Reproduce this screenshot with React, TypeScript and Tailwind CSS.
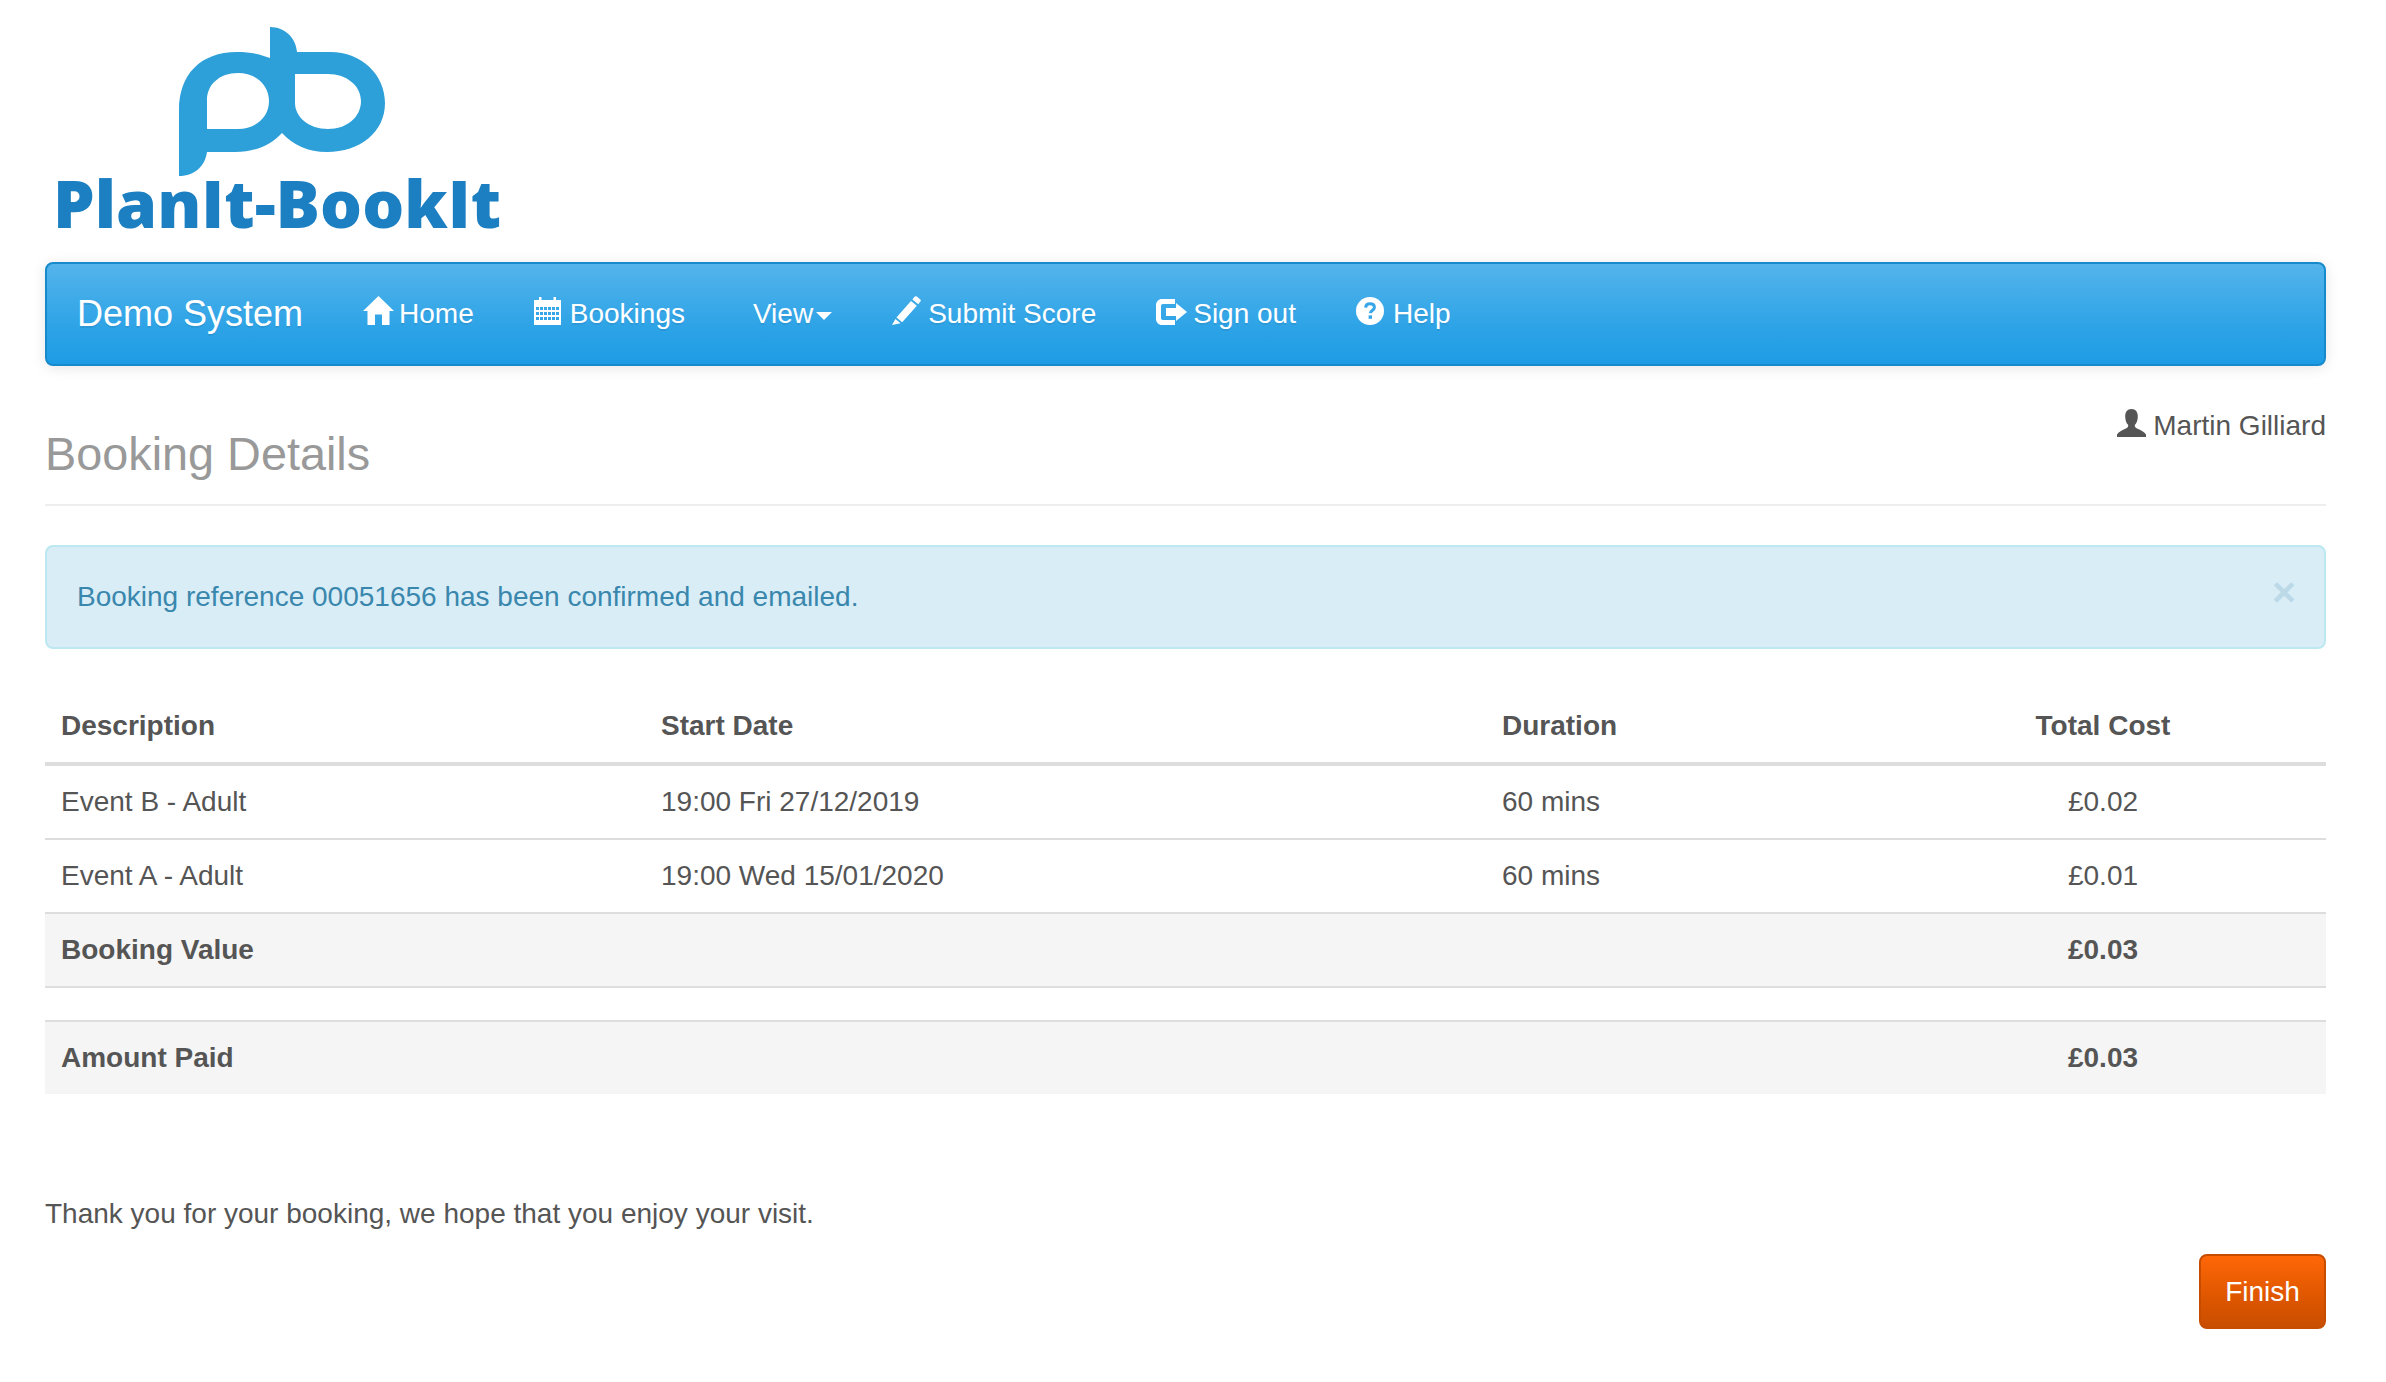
import type { ReactNode } from "react";

const HomeIcon = () => (
  <svg width="31" height="29" viewBox="0 0 31 29" className="mr-[5px] shrink-0 -mt-[6px]" fill="#fff">
    <path d="M15.5 0 L31 15 L26.5 15 L26.5 29 L19 29 L19 18.5 L12 18.5 L12 29 L4.5 29 L4.5 15 L0 15 Z" />
  </svg>
);

const CalendarIcon = () => (
  <svg width="27" height="28" viewBox="0 0 27 28" className="mr-[9px] shrink-0 -mt-[5px]" fill="#fff">
    <path
      fillRule="evenodd"
      d="M5 0h2.5v3h12V0H22v3h5v25H0V3h5z M2 10v3h3v-3z M6 10v3h3v-3z M10 10v3h3v-3z M14 10v3h3v-3z M18 10v3h3v-3z M22 10v3h3v-3z M2 15v3h3v-3z M6 15v3h3v-3z M10 15v3h3v-3z M14 15v3h3v-3z M18 15v3h3v-3z M22 15v3h3v-3z M2 20v3h3v-3z M6 20v3h3v-3z M10 20v3h3v-3z M14 20v3h3v-3z M18 20v3h3v-3z M22 20v3h3v-3z"
    />
  </svg>
);

const PencilIcon = () => (
  <svg width="29" height="29" viewBox="0 0 29 29" className="mr-[7px] shrink-0 -mt-[6px]" fill="#fff">
    <path d="M22.5 0.8 C23.3 0 24 0 24.8 0.6 L28.3 3.4 C29 4 29 4.8 28.4 5.5 L26.2 8.2 L20.4 3.4 Z M19 5 L24.8 9.8 L10.2 26.3 L4.4 21.5 Z M3.4 23 L8.6 27.3 L0 29 Z" />
  </svg>
);

const SignOutIcon = () => (
  <svg width="31" height="26" viewBox="0 0 31 26" className="mr-[6px] shrink-0 -mt-[3px]" fill="#fff">
    <path d="M6 0 H19 V5 H7 C5.8 5 5 5.8 5 7 V19 C5 20.2 5.8 21 7 21 H19 V26 H6 C2.7 26 0 23.3 0 20 V6 C0 2.7 2.7 0 6 0 Z" />
    <path d="M20 4 L31 13 L20 22 V17 H10 V9 H20 Z" />
  </svg>
);

const HelpIcon = () => (
  <svg width="28" height="28" viewBox="0 0 28 28" className="mr-[9px] shrink-0 -mt-[5px]">
    <circle cx="14" cy="14" r="14" fill="#fff" />
    <path d="M9.6 10.6 C9.8 8 11.6 6.8 14 6.8 C16.6 6.8 18.4 8.2 18.4 10.4 C18.4 13.2 14.6 13.2 14.4 16.2" fill="none" stroke="#36a6e8" strokeWidth="3" />
    <rect x="12.6" y="18.4" width="3.4" height="3.4" fill="#36a6e8" />
  </svg>
);

const UserIcon = () => (
  <svg width="29" height="28" viewBox="0 0 29 28" className="mr-[7px] shrink-0 -mt-[6px]" fill="#555">
    <path d="M14.5 0 C18.8 0 20.8 3.2 20.8 7.4 C20.8 11 19.6 14 17.8 16 C17.6 17.6 18.2 18.6 20 19.4 C24 21.2 27.6 22.6 29 25.4 V28 H0 V25.4 C1.4 22.6 5 21.2 9 19.4 C10.8 18.6 11.4 17.6 11.2 16 C9.4 14 8.2 11 8.2 7.4 C8.2 3.2 10.2 0 14.5 0 Z" />
  </svg>
);

const Logo = () => (
  <svg width="470" height="262" viewBox="45 0 470 262" className="block">
    <path
      fill="#2d9fd9"
      fillRule="evenodd"
      d="M179 176 L179 110 C179 75 200 52 237 52 C250 52 260 54 270 58 L270 27 C285 27 296 38 297 52 L330 52 C362 52 385 75 385 103 C385 132 360 152 327 152 C308 152 293 145 282 133 C271 145 255 152 235 152 L207 152 C205 166 195 176 179 176 Z M207 129 L207 100 C207 85 219 73 238 73 C256 73 269 85 269 101 C269 117 256 129 238 129 Z M295 74 L328 74 C347 74 361 86 361 101 C361 117 347 129 328 129 C309 129 295 117 295 103 Z"
    />
    <text
      x="53"
      y="228"
      fill="#1b7fc2"
      fontFamily="'Open Sans', sans-serif"
      fontWeight="800"
      fontSize="66"
      textLength="448"
      lengthAdjust="spacingAndGlyphs"
    >
      PlanIt-BookIt
    </text>
  </svg>
);

function NavLink({ icon, children, extra }: { icon?: ReactNode; children: ReactNode; extra?: string }) {
  return <a className={`flex items-center px-[30px] ${extra ?? ""}`}>{icon}<span>{children}</span></a>;
}

const rows = [
  { desc: "Event B - Adult", start: "19:00 Fri 27/12/2019", dur: "60 mins", cost: "£0.02" },
  { desc: "Event A - Adult", start: "19:00 Wed 15/01/2020", dur: "60 mins", cost: "£0.01" },
];

export default function App() {
  return (
    <div className="min-h-[1382px] bg-white pl-[45px] pr-[60px] text-[28px] leading-[40px] text-[#555] font-['Liberation_Sans',Arial,sans-serif]">
      <Logo />

      <nav className="flex h-[104px] items-stretch rounded-[8px] border-2 border-[#178acc] bg-[linear-gradient(#54b4eb,#2fa4e7_60%,#1d9ce5)] pb-[1px] text-white shadow-[0_2px_14px_rgba(0,0,0,0.1)] [text-shadow:0_2px_0_rgba(0,0,0,0.08)]">
        <a className="flex items-center px-[30px] text-[36px]">Demo System</a>
        <div className="flex items-stretch">
          <NavLink icon={<HomeIcon />}>Home</NavLink>
          <NavLink icon={<CalendarIcon />} extra="pr-[38px]">Bookings</NavLink>
          <a className="flex items-center px-[30px]">
            <span>View</span>
            <span className="ml-[3px] mt-[4px] h-0 w-0 border-x-[8px] border-t-[8px] border-x-transparent border-t-white" />
          </a>
          <NavLink icon={<PencilIcon />}>Submit Score</NavLink>
          <NavLink icon={<SignOutIcon />}>Sign out</NavLink>
          <NavLink icon={<HelpIcon />}>Help</NavLink>
        </div>
      </nav>

      <div className="flex h-[140px] items-start justify-between border-b-2 border-[#eee]">
        <h1 className="mt-[63px] text-[46.8px] leading-[50px] text-[#999]">Booking Details</h1>
        <div className="mt-[40px] flex items-center">
          <UserIcon />
          <span>Martin Gilliard</span>
        </div>
      </div>

      <div className="mt-[39px] flex h-[104px] items-center justify-between rounded-[8px] border-2 border-[#bce8f1] bg-[#d9edf7] pl-[30px] pr-[28px] text-[#3a87ad]">
        <span>Booking reference 00051656 has been confirmed and emailed.</span>
        <span className="-mt-[10px] text-[41px] font-bold leading-[40px] text-[#bcd9e8]">×</span>
      </div>

      <table className="mt-[40px] w-full table-fixed border-separate border-spacing-0">
        <colgroup>
          <col className="w-[601px]" />
          <col className="w-[840px]" />
          <col className="w-[394px]" />
          <col />
        </colgroup>
        <thead>
          <tr className="font-bold">
            <th className="border-b-4 border-[#ddd] pb-[16px] pl-[16px] pt-[17px] text-left">Description</th>
            <th className="border-b-4 border-[#ddd] pb-[16px] pl-[15px] pt-[17px] text-left">Start Date</th>
            <th className="border-b-4 border-[#ddd] pb-[16px] pl-[16px] pt-[17px] text-left">Duration</th>
            <th className="border-b-4 border-[#ddd] pb-[16px] pt-[17px] text-center">Total Cost</th>
          </tr>
        </thead>
        <tbody>
          {rows.map((r) => (
            <tr key={r.desc}>
              <td className="border-b-2 border-[#ddd] py-[16px] pl-[16px]">{r.desc}</td>
              <td className="border-b-2 border-[#ddd] py-[16px] pl-[15px]">{r.start}</td>
              <td className="border-b-2 border-[#ddd] py-[16px] pl-[16px]">{r.dur}</td>
              <td className="border-b-2 border-[#ddd] py-[16px] text-center">{r.cost}</td>
            </tr>
          ))}
          <tr className="bg-[#f5f5f5] font-bold">
            <td className="border-b-2 border-[#ddd] py-[16px] pl-[16px]">Booking Value</td>
            <td className="border-b-2 border-[#ddd]" />
            <td className="border-b-2 border-[#ddd]" />
            <td className="border-b-2 border-[#ddd] py-[16px] text-center">£0.03</td>
          </tr>
          <tr>
            <td colSpan={4} className="h-[34px] border-b-2 border-[#ddd] p-0" />
          </tr>
          <tr className="bg-[#f5f5f5] font-bold">
            <td className="py-[16px] pl-[16px]">Amount Paid</td>
            <td />
            <td />
            <td className="py-[16px] text-center">£0.03</td>
          </tr>
        </tbody>
      </table>

      <p className="mt-[100px]">Thank you for your booking, we hope that you enjoy your visit.</p>

      <div className="mt-[20px] flex justify-end">
        <button className="h-[75px] w-[127px] rounded-[8px] border-2 border-[#c64d00] bg-[linear-gradient(#ff6707,#dd5600_60%,#c94e00)] text-white">
          Finish
        </button>
      </div>
    </div>
  );
}
